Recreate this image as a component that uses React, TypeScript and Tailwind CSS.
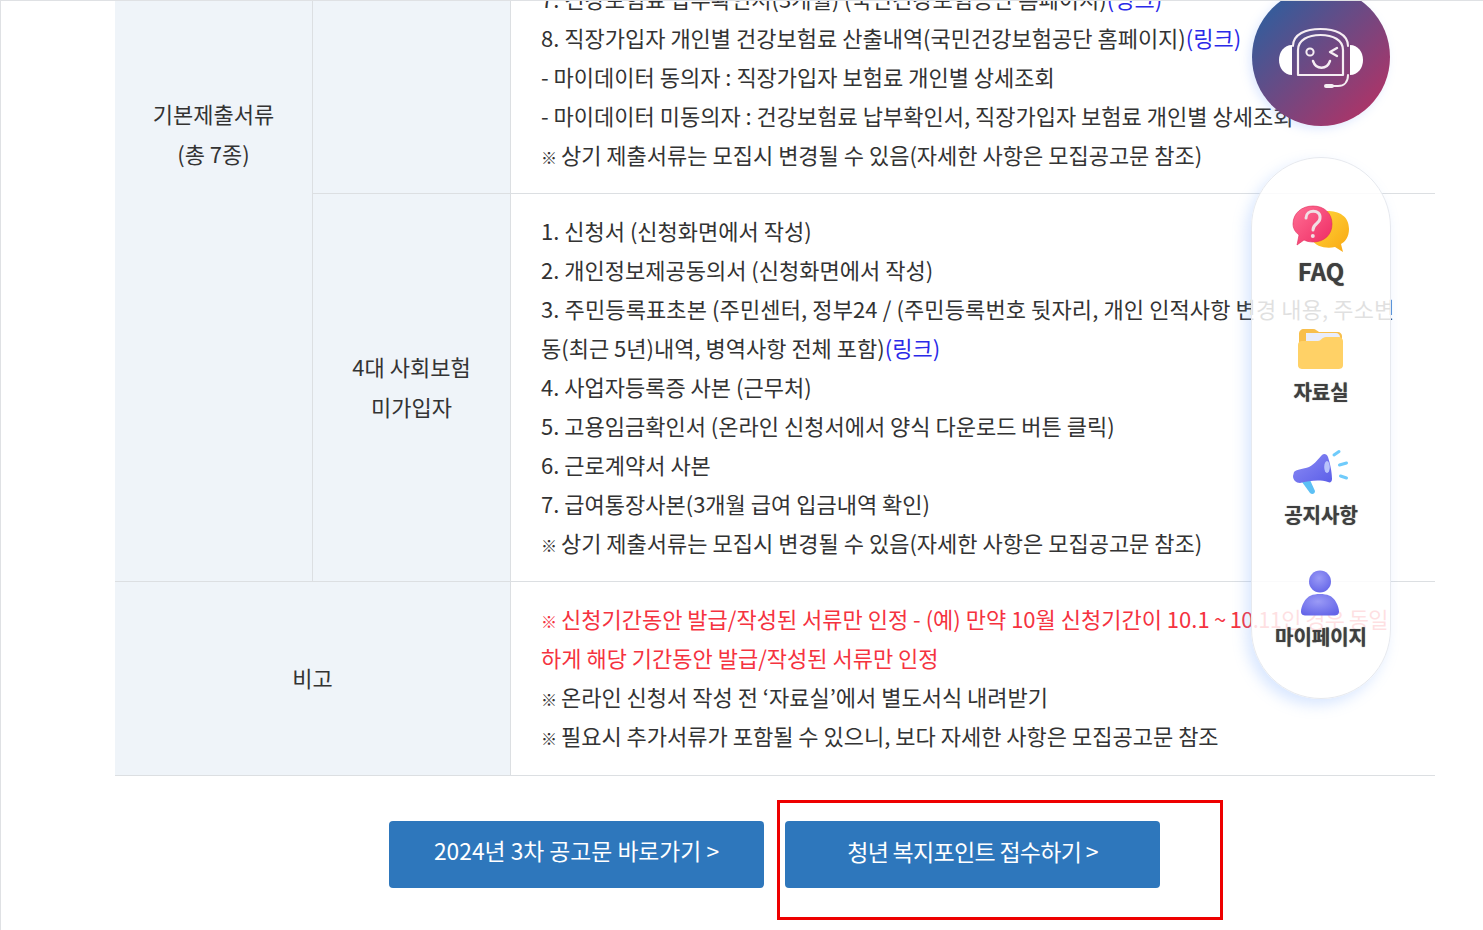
import React from "react";

const FONT = "font-['Noto_Sans_CJK_KR','Noto_Sans',sans-serif]";

function Line({ children, red, cls = "" }: { children: React.ReactNode; red?: boolean; cls?: string }) {
  return (
    <div className={`h-[39px] leading-[39px] whitespace-nowrap ${red ? "text-[#f5333f]" : ""} ${cls}`}>{children}</div>
  );
}

function LinkText() {
  return <span className="text-[#2a2ae8]">(링크)</span>;
}

function Mark() {
  return <span className="text-[16px] font-bold -mr-[1px]">※</span>;
}

function HeadsetIcon() {
  return (
    <svg viewBox="0 0 138 138" className="w-full h-full block">
      <defs>
        <linearGradient id="hg" x1="0.08" y1="0.08" x2="0.92" y2="0.92">
          <stop offset="0" stopColor="#2c5f9f" />
          <stop offset="1" stopColor="#b33265" />
        </linearGradient>
      </defs>
      <circle cx="69" cy="69" r="69" fill="url(#hg)" />
      <g fill="none" stroke="#f6eef3" strokeLinecap="round" strokeLinejoin="round">
        <path d="M41 58 C41 46 54 41 68.5 41 C83 41 96 46 96 58" strokeWidth="2" />
        <path d="M46 87 V62 C46 52 56 47 68.5 47 C81 47 91 52 91 62 V87 Z" strokeWidth="2.2" />
        <circle cx="58" cy="64" r="3.6" strokeWidth="2" />
        <path d="M85 60 L78 64 L85 68" strokeWidth="2.4" />
        <path d="M61 73 C64 82 75 82 78 73" strokeWidth="2.4" />
        <path d="M96 87 C96 94 92 98 86 98 H74" strokeWidth="2" />
        <path d="M74 98 H80" strokeWidth="4" />
      </g>
      <path d="M40 57 V87 C32 87 27 80 27 72 C27 64 32 57 40 57 Z" fill="#fff" />
      <path d="M98 57 V87 C106 87 111 80 111 72 C111 64 106 57 98 57 Z" fill="#fff" />
    </svg>
  );
}

function FaqIcon() {
  return (
    <svg viewBox="0 0 60 48" className="w-[60px] h-[48px] block">
      <defs>
        <linearGradient id="fy" x1="0" y1="0" x2="1" y2="1">
          <stop offset="0" stopColor="#ffd83d" />
          <stop offset="1" stopColor="#f9a712" />
        </linearGradient>
        <linearGradient id="fp" x1="0" y1="0" x2="1" y2="1">
          <stop offset="0" stopColor="#ff6f94" />
          <stop offset="1" stopColor="#ee2a63" />
        </linearGradient>
      </defs>
      <path d="M36 6 C48 6 58 11 58 24 C58 32 54 37 50 39 L52 47 L44 42 C36 44 24 42 21 34 Z" fill="url(#fy)" />
      <path d="M22 1 C33 1 41 8 41 19 C41 30 33 37 22 37 C18 37 15 36 13 35 L6 40 L8 30 C4 27 2 23 2 19 C2 8 11 1 22 1 Z" fill="url(#fp)" stroke="#e02a5b" strokeWidth="0.6" />
      <path d="M15 13 C15 4 30 4 29 13 C29 19 22 18 22 25" fill="none" stroke="#f0dfe4" strokeWidth="3" strokeLinecap="round" />
      <circle cx="21.8" cy="31" r="2" fill="#f0dfe4" />
    </svg>
  );
}

function FolderIcon() {
  return (
    <svg viewBox="0 0 60 48" className="w-[60px] h-[48px] block">
      <path d="M8 10 C8 7 10 5 13 5 H22 C25 5 26 7 28 8 H47 C49 8 51 10 51 12 V34 H8 Z" fill="#f8bf4c" />
      <path d="M15 9 H45 C47 9 49 11 49 13 V30 H15 Z" fill="#e9edfb" />
      <path d="M7 21 C7 18 9 17 11 17 H27 C30 17 31 13 35 13 H48 C50 13 52 15 52 17 V41 C52 44 50 45 47 45 H12 C9 45 7 44 7 41 Z" fill="#ffd166" />
    </svg>
  );
}

function MegaphoneIcon() {
  return (
    <svg viewBox="0 0 60 52" className="w-[60px] h-[52px] block">
      <defs>
        <linearGradient id="mg" x1="0" y1="0" x2="1" y2="1">
          <stop offset="0" stopColor="#8d8df5" />
          <stop offset="1" stopColor="#5b5ee8" />
        </linearGradient>
      </defs>
      <path d="M11 37 L19 35 L24 46 C24 49 21 50 19 48 Z" fill="#5cc0f5" />
      <path d="M3 27 C6 24 12 24 18 22 C24 19 28 13 31 10 C33 8 36 9 37 12 C39 18 41 27 41 34 C41 37 39 38 37 37 C28 34 18 36 9 38 C5 38 2 35 2 31 Z" fill="url(#mg)" />
      <ellipse cx="36" cy="22" rx="2.8" ry="6" fill="#b9c3fb" />
      <g stroke="#6fcbfb" strokeWidth="3" strokeLinecap="round">
        <path d="M43 10 L48 6.5" />
        <path d="M48.5 20 L55.5 18" />
        <path d="M49.5 31 L55.5 33" />
      </g>
    </svg>
  );
}

function PersonIcon() {
  return (
    <svg viewBox="0 0 60 48" className="w-[60px] h-[48px] block">
      <defs>
        <radialGradient id="pg" cx="0.45" cy="0.35" r="0.7">
          <stop offset="0" stopColor="#9a9af6" />
          <stop offset="1" stopColor="#6465e8" />
        </radialGradient>
      </defs>
      <g transform="translate(-1 1.5)">
        <circle cx="30" cy="11" r="11" fill="url(#pg)" />
        <path d="M21 25 C25 23 35 23 39 25 C45 27 49 36 49 41 C49 44 47 45 44 45 H16 C13 45 11 44 11 41 C11 36 15 27 21 25 Z" fill="url(#pg)" />
      </g>
    </svg>
  );
}

function SideItem({ icon, label, cls, text = "text-[20px] leading-[24px]" }: { icon: React.ReactNode; label: string; cls: string; text?: string }) {
  return (
    <div className={`flex flex-col items-center ${cls}`}>
      <div className="h-[48px] flex items-center justify-center">{icon}</div>
      <div className={`mt-[8px] font-bold text-[#3f3f3f] whitespace-nowrap [text-shadow:0_0_1px_#666666] ${text}`}>{label}</div>
    </div>
  );
}

function Cell({ children, cls = "" }: { children?: React.ReactNode; cls?: string }) {
  return <div className={`bg-[#eff4f9] flex flex-col items-center justify-center text-center text-[22px] leading-[40px] pb-[4px] ${cls}`}>{children}</div>;
}

export default function App() {
  return (
    <div className={`relative h-[930px] overflow-hidden bg-white border-l border-t border-[#dfe1e4] flex flex-col justify-end text-[#333333] ${FONT}`}>
      <div className="shrink-0 pl-[114px] pr-[48px]">
        <div className="grid grid-cols-[198px_198px_minmax(0,1fr)] grid-rows-[506px_388px_193px] border-b border-[#dcdfe2]">
          <Cell cls="row-span-2 border-r border-[#dcdfe2] border-b">
            <div>기본제출서류</div>
            <div>(총 7종)</div>
          </Cell>
          <Cell cls="border-r border-b border-[#dcdfe2]" />
          <div className="border-b border-[#dcdfe2] pl-[30px] pb-[19px] flex flex-col justify-end text-[22px]">
            <Line>7. 건강보험료 납부확인서(3개월) (국민건강보험공단 홈페이지)<LinkText /></Line>
            <Line>8. 직장가입자 개인별 건강보험료 산출내역(국민건강보험공단 홈페이지)<LinkText /></Line>
            <Line>- 마이데이터 동의자 : 직장가입자 보험료 개인별 상세조회</Line>
            <Line>- 마이데이터 미동의자 : 건강보험료 납부확인서, 직장가입자 보험료 개인별 상세조회</Line>
            <Line><Mark /> 상기 제출서류는 모집시 변경될 수 있음(자세한 사항은 모집공고문 참조)</Line>
          </div>
          <Cell cls="border-r border-b border-[#dcdfe2]">
            <div>4대 사회보험</div>
            <div>미가입자</div>
          </Cell>
          <div className="border-b border-[#dcdfe2] pl-[30px] pt-[17px] text-[22px]">
            <Line>1. 신청서 (신청화면에서 작성)</Line>
            <Line>2. 개인정보제공동의서 (신청화면에서 작성)</Line>
            <Line cls="tracking-[0.005em]">3. 주민등록표초본 (주민센터, 정부24 / (주민등록번호 뒷자리, 개인 인적사항 변경 내용, 주소변</Line>
            <Line>동(최근 5년)내역, 병역사항 전체 포함)<LinkText /></Line>
            <Line>4. 사업자등록증 사본 (근무처)</Line>
            <Line>5. 고용임금확인서 (온라인 신청서에서 양식 다운로드 버튼 클릭)</Line>
            <Line>6. 근로계약서 사본</Line>
            <Line>7. 급여통장사본(3개월 급여 입금내역 확인)</Line>
            <Line><Mark /> 상기 제출서류는 모집시 변경될 수 있음(자세한 사항은 모집공고문 참조)</Line>
          </div>
          <Cell cls="col-span-2 border-r border-[#dcdfe2]">비고</Cell>
          <div className="pl-[30px] pt-[17px] text-[22px]">
            <Line red><Mark /> 신청기간동안 발급/작성된 서류만 인정 - (예) 만약 10월 신청기간이 10.1<span className="tracking-[-0.03em]"> ~ 10.11인 경우 동일</span></Line>
            <Line red>하게 해당 기간동안 발급/작성된 서류만 인정</Line>
            <Line><Mark /> 온라인 신청서 작성 전 ‘자료실’에서 별도서식 내려받기</Line>
            <Line><Mark /> 필요시 추가서류가 포함될 수 있으니, 보다 자세한 사항은 모집공고문 참조</Line>
          </div>
        </div>
        <div className="flex justify-center gap-[21px] pt-[45px] pb-[42px] pr-[1px]">
          <div className="w-[375px] h-[67px] rounded-[4px] bg-[#2e77bc] text-white text-[22.8px] flex items-center justify-center pb-[7px]">
            2024년 3차 공고문 바로가기 &gt;
          </div>
          <div className="relative w-[375px] h-[67px] rounded-[4px] bg-[#2e77bc] text-white text-[23px] tracking-[-0.03em] flex items-center justify-center pb-[7px]">
            청년 복지포인트 접수하기 &gt;
            <div className="absolute -left-[8px] -right-[63px] -top-[21px] -bottom-[32px] border-[3px] border-[#ee0000]" />
          </div>
        </div>
      </div>

      <div className="absolute left-[1250px] -top-[13px] w-[140px] flex flex-col items-center gap-[31px]">
        <div className="w-[138px] h-[138px] rounded-full shadow-[-3px_3px_10px_rgba(130,170,255,0.25)]">
          <HeadsetIcon />
        </div>
        <div className="w-[140px] h-[542px] rounded-[70px] bg-white/85 border border-[#e6e9ef] shadow-[-5px_6px_14px_rgba(120,170,255,0.28)] flex flex-col items-center pt-[47px]">
          <SideItem icon={<FaqIcon />} label="FAQ" cls="" text="text-[24px] leading-[20px]" />
          <SideItem icon={<FolderIcon />} label="자료실" cls="mt-[43px]" />
          <SideItem icon={<MegaphoneIcon />} label="공지사항" cls="mt-[43px]" />
          <SideItem icon={<PersonIcon />} label="마이페이지" cls="mt-[42px]" />
        </div>
      </div>
    </div>
  );
}
